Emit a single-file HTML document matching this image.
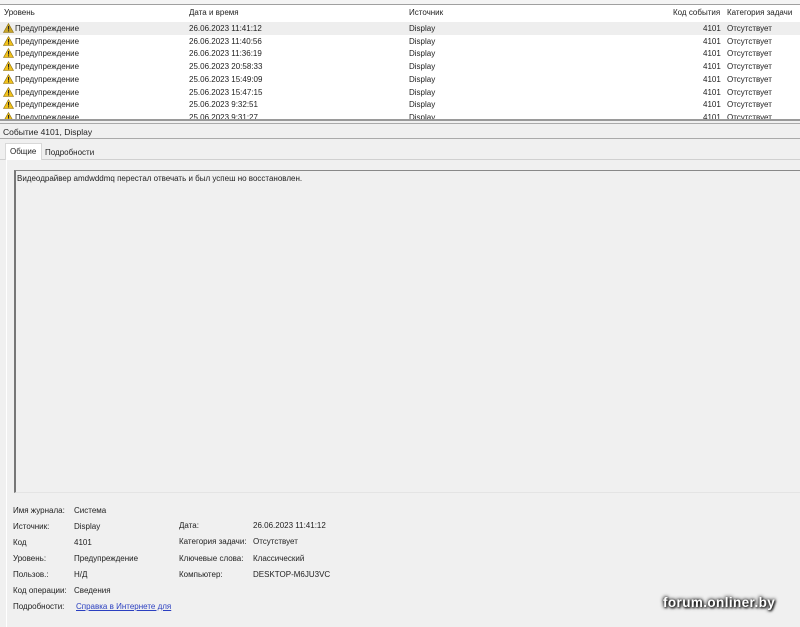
<!DOCTYPE html>
<html><head><meta charset="utf-8"><style>
*{margin:0;padding:0;box-sizing:border-box}
body{width:800px;height:627px;background:#f0f0f0;font-family:"Liberation Sans","DejaVu Sans",sans-serif;font-size:8px;color:#222;position:relative;overflow:hidden}
.a{position:absolute;white-space:nowrap}
#list{position:absolute;left:0;top:5px;width:800px;height:114px;background:#fff;overflow:hidden}
.row{position:absolute;left:0;width:800px;height:12.7px}
.row span{position:absolute;top:2px}
.tri{position:absolute;left:3px;top:1px;width:11px;height:10px}
</style></head><body>
<div class="a" style="left:0;top:0;width:800px;height:4px;background:#f4f4f4"></div>
<div class="a" style="left:0;top:4px;width:800px;height:1px;background:#a0a0a0"></div>
<div id="list">
 <div class="row" style="top:1px"><span style="left:4px">Уровень</span><span style="left:189px">Дата и время</span><span style="left:409px">Источник</span><span style="left:673px">Код события</span><span style="left:727px">Категория задачи</span></div>
</div>
<div class="a" style="left:0;top:119px;width:800px;height:2px;background:#9a9a9a"></div>
<div class="a" style="left:0;top:123px;width:800px;height:1px;background:#aaa"></div>
<div class="a" style="left:3px;top:127px;font-size:8.5px">Событие 4101, Display</div>
<div class="a" style="left:0;top:138px;width:800px;height:1px;background:#aaa"></div>
<div class="a" style="left:0;top:159px;width:800px;height:1px;background:#d0d0d0"></div>
<div class="a" style="left:6px;top:160px;width:1px;height:467px;background:#fff"></div>
<div class="a" style="left:5px;top:143px;width:37px;height:17px;background:#fff;border:1px solid #d8d8d8;border-bottom:none"></div>
<div class="a" style="left:10px;top:147px">Общие</div>
<div class="a" style="left:45px;top:148px">Подробности</div>
<div class="a" style="left:14px;top:170px;width:786px;height:323px;border:1px solid #888;border-right:none;border-bottom:1px solid #e4e4e4;border-left:2px solid #777"></div>
<div class="a" style="left:17px;top:174px">Видеодрайвер amdwddmq перестал отвечать и был успеш но восстановлен.</div>
<div class="a" style="left:13px;top:506px">Имя журнала:</div><div class="a" style="left:74px;top:506px">Система</div>
<div class="a" style="left:13px;top:522px">Источник:</div><div class="a" style="left:74px;top:522px">Display</div>
<div class="a" style="left:13px;top:538px">Код</div><div class="a" style="left:74px;top:538px">4101</div>
<div class="a" style="left:13px;top:554px">Уровень:</div><div class="a" style="left:74px;top:554px">Предупреждение</div>
<div class="a" style="left:13px;top:570px">Пользов.:</div><div class="a" style="left:74px;top:570px">Н/Д</div>
<div class="a" style="left:13px;top:586px">Код операции:</div><div class="a" style="left:74px;top:586px">Сведения</div>
<div class="a" style="left:13px;top:602px">Подробности:</div><div class="a" style="left:76px;top:602px;color:#2a3fc0;text-decoration:underline">Справка в Интернете для </div>
<div class="a" style="left:179px;top:521px">Дата:</div><div class="a" style="left:253px;top:521px">26.06.2023 11:41:12</div>
<div class="a" style="left:179px;top:537px">Категория задачи:</div><div class="a" style="left:253px;top:537px">Отсутствует</div>
<div class="a" style="left:179px;top:554px">Ключевые слова:</div><div class="a" style="left:253px;top:554px">Классический</div>
<div class="a" style="left:179px;top:570px">Компьютер:</div><div class="a" style="left:253px;top:570px">DESKTOP-M6JU3VC</div>
<div class="a" style="left:663px;top:595px;font-size:13.5px;font-weight:bold;color:#fff;text-shadow:0 0 3px #000,0 0 4px #333,1px 1px 2px #000;letter-spacing:0.4px">forum.onliner.by</div>
<script>
var d=["26.06.2023 11:41:12","26.06.2023 11:40:56","26.06.2023 11:36:19","25.06.2023 20:58:33","25.06.2023 15:49:09","25.06.2023 15:47:15","25.06.2023 9:32:51","25.06.2023 9:31:27"];
var h="";
for(var i=0;i<8;i++){var t=17+i*12.7;
h+='<div class="row" style="top:'+t+'px;'+(i==0?'background:#eeeeee;':'')+'"><svg class="tri" viewBox="0 0 11 10"><path d="M5.5 0.5L10.5 9.5H0.5Z" fill="'+(i==0?'#c9a62a':'#f2c21b')+'" stroke="#8a6d10" stroke-width="0.6"/><rect x="5" y="3" width="1.1" height="3.6" fill="#222"/><rect x="5" y="7.3" width="1.1" height="1.1" fill="#222"/></svg><span style="left:15px">Предупреждение</span><span style="left:189px">'+d[i]+'</span><span style="left:409px">Display</span><span style="left:703px">4101</span><span style="left:727px">Отсутствует</span></div>';}
document.getElementById('list').insertAdjacentHTML('beforeend',h);
</script>
</body></html>
